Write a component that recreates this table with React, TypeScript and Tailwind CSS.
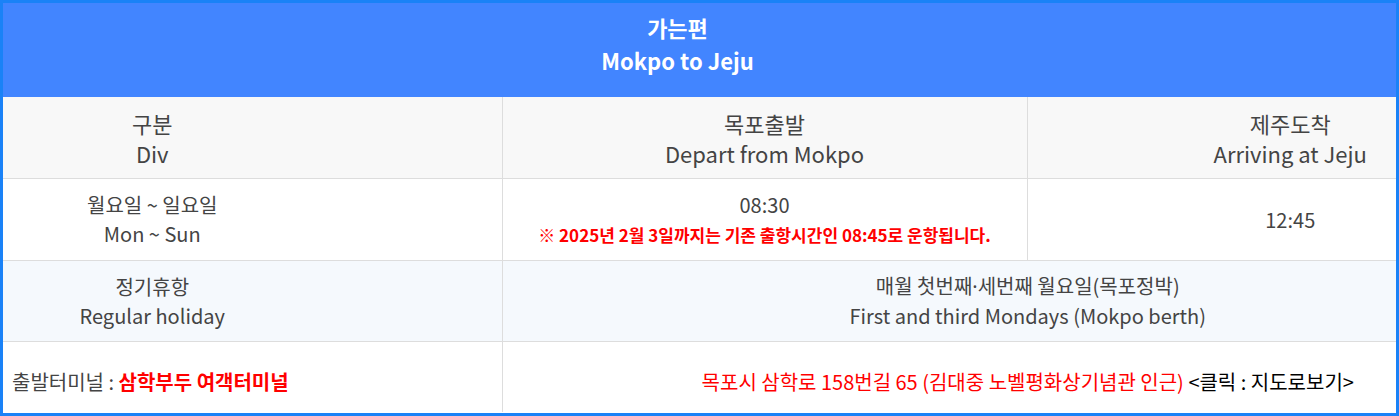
const font = { fontFamily: '"Noto Sans CJK KR", "Noto Sans", sans-serif' };

const App = () => (
    <div
        className="w-[1399px] h-[416px] border-[3px] border-[#1a82f7] bg-white text-[#444]"
        style={font}
    >
        <table className="w-full border-collapse table-fixed">
            <colgroup>
                <col className="w-[499px]" />
                <col className="w-[525px]" />
                <col />
            </colgroup>
            <thead>
                <tr className="h-[94px] bg-[#4285ff]">
                    <th
                        colSpan={3}
                        className="pb-[13px] pr-[44px] text-center text-[22px] leading-[33px] font-bold text-white"
                    >
                        가는편
                        <br />
                        Mokpo to Jeju
                    </th>
                </tr>
                <tr className="h-[81px] bg-[#f8f8f8] text-[22px] leading-[30px]">
                    <th className="font-normal pt-[1px] pr-[200px] border-b border-[#ddd]">
                        구분
                        <br />
                        Div
                    </th>
                    <th className="font-normal pt-[1px] border-x border-b border-[#ddd]">
                        목포출발
                        <br />
                        Depart from Mokpo
                    </th>
                    <th className="font-normal pt-[1px] pl-[157px] border-b border-[#ddd]">
                        제주도착
                        <br />
                        Arriving at Jeju
                    </th>
                </tr>
            </thead>
            <tbody className="text-[20px] leading-[29px]">
                <tr className="h-[82px]">
                    <td className="text-center pr-[200px] border-b border-[#ddd]">
                        월요일 ~ 일요일
                        <br />
                        Mon ~ Sun
                    </td>
                    <td className="text-center border-x border-b border-[#ddd]">
                        08:30
                        <br />
                        <span className="text-[17px] font-bold text-[#ff0000]">
                            ※ 2025년 2월 3일까지는 기존 출항시간인 08:45로 운항됩니다.
                        </span>
                    </td>
                    <td className="text-center pl-[157px] border-b border-[#ddd]">
                        12:45
                    </td>
                </tr>
                <tr className="h-[81px] bg-[#f5f9fd]">
                    <td className="text-center pr-[200px] border-b border-r border-[#ddd]">
                        정기휴항
                        <br />
                        Regular holiday
                    </td>
                    <td
                        colSpan={2}
                        className="text-center pl-[157px] border-b border-[#ddd]"
                    >
                        매월 첫번째
                        <span style={{ fontFamily: '"Noto Sans", sans-serif' }}>·</span>
                        세번째 월요일(목포정박)
                        <br />
                        First and third Mondays (Mokpo berth)
                    </td>
                </tr>
                <tr className="h-[71px]">
                    <td className="pl-[9px] pt-[10px] border-r border-[#ddd]">
                        출발터미널 :{" "}
                        <b className="text-[#ff0000]">삼학부두 여객터미널</b>
                    </td>
                    <td colSpan={2} className="text-center pl-[157px] pt-[10px]">
                        <span className="text-[#ff0000]">
                            목포시 삼학로 158번길 65 (김대중 노벨평화상기념관 인근)
                        </span>{" "}
                        <span className="text-black">&lt;클릭 : 지도로보기&gt;</span>
                    </td>
                </tr>
            </tbody>
        </table>
    </div>
);

export default App;
